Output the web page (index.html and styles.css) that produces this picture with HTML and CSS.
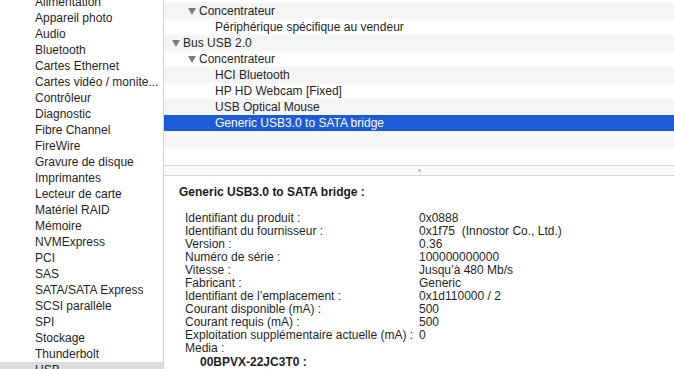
FILE: index.html
```html
<!DOCTYPE html>
<html lang="fr">
<head>
<meta charset="utf-8">
<link rel="stylesheet" href="styles.css">
</head>
<body>
<div class="app">
  <nav class="sidebar">
    <ul class="side-list">
      <li>Alimentation</li>
      <li>Appareil photo</li>
      <li>Audio</li>
      <li>Bluetooth</li>
      <li>Cartes Ethernet</li>
      <li>Cartes vidéo / monite...</li>
      <li>Contrôleur</li>
      <li>Diagnostic</li>
      <li>Fibre Channel</li>
      <li>FireWire</li>
      <li>Gravure de disque</li>
      <li>Imprimantes</li>
      <li>Lecteur de carte</li>
      <li>Matériel RAID</li>
      <li>Mémoire</li>
      <li>NVMExpress</li>
      <li>PCI</li>
      <li>SAS</li>
      <li>SATA/SATA Express</li>
      <li>SCSI parallèle</li>
      <li>SPI</li>
      <li>Stockage</li>
      <li>Thunderbolt</li>
      <li class="sel">USB</li>
    </ul>
  </nav>
  <main class="content">
    <div class="tree">
      <div class="row alt lvl2"><span class="tri"></span>Concentrateur</div>
      <div class="row lvl3">Périphérique spécifique au vendeur</div>
      <div class="row alt lvl1"><span class="tri"></span>Bus USB 2.0</div>
      <div class="row lvl2"><span class="tri"></span>Concentrateur</div>
      <div class="row alt lvl3">HCI Bluetooth</div>
      <div class="row lvl3">HP HD Webcam [Fixed]</div>
      <div class="row alt lvl3">USB Optical Mouse</div>
      <div class="row selected lvl3">Generic USB3.0 to SATA bridge</div>
      <div class="row alt"></div>
      <div class="row"></div>
    </div>
    <div class="splitter"><span class="grip"></span></div>
    <section class="detail">
      <h2 class="title">Generic USB3.0 to SATA bridge :</h2>
      <div class="props">
        <div class="prop"><span class="k">Identifiant du produit :</span><span class="v">0x0888</span></div>
        <div class="prop"><span class="k">Identifiant du fournisseur :</span><span class="v">0x1f75&nbsp; (Innostor Co., Ltd.)</span></div>
        <div class="prop"><span class="k">Version :</span><span class="v">0.36</span></div>
        <div class="prop"><span class="k">Numéro de série :</span><span class="v">100000000000</span></div>
        <div class="prop"><span class="k">Vitesse :</span><span class="v">Jusqu’à 480 Mb/s</span></div>
        <div class="prop"><span class="k">Fabricant :</span><span class="v">Generic</span></div>
        <div class="prop"><span class="k">Identifiant de l’emplacement :</span><span class="v">0x1d110000 / 2</span></div>
        <div class="prop"><span class="k">Courant disponible (mA) :</span><span class="v">500</span></div>
        <div class="prop"><span class="k">Courant requis (mA) :</span><span class="v">500</span></div>
        <div class="prop"><span class="k">Exploitation supplémentaire actuelle (mA) :</span><span class="v">0</span></div>
        <div class="prop"><span class="k">Media :</span></div>
        <div class="sub">00BPVX-22JC3T0 :</div>
      </div>
    </section>
  </main>
</div>
</body>
</html>
```

FILE: styles.css
```css
* { box-sizing: border-box; margin: 0; padding: 0; }
html, body { width: 674px; height: 369px; overflow: hidden; background: #fff; }
body {
  font-family: "Liberation Sans", Arial, sans-serif;
  font-size: 12px;
  color: #1f1f1f;
}
.app { display: flex; height: 369px; }
.sidebar {
  width: 164px;
  flex: none;
  border-right: 1px solid #d3d3d3;
  overflow: hidden;
  background: #fff;
}
.side-list { list-style: none; margin-top: -6px; }
.side-list li {
  height: 16px;
  line-height: 16px;
  padding-left: 35px;
  white-space: nowrap;
  overflow: hidden;
}
.side-list li.sel { background: #dcdcdc; }
.content { flex: 1; display: flex; flex-direction: column; min-width: 0; }
.tree { padding-top: 3px; }
.row {
  height: 16px;
  line-height: 16px;
  display: flex;
  align-items: center;
  white-space: nowrap;
}
.row.alt { background: #f4f5f5; }
.row.selected { background: #1d5bd8; color: #fff; }
.lvl1 { padding-left: 8px; }
.lvl2 { padding-left: 24px; }
.lvl3 { padding-left: 51px; }
.tri {
  width: 0; height: 0;
  border-left: 4px solid transparent;
  border-right: 4px solid transparent;
  border-top: 7px solid #7b7b7b;
  margin-right: 3px;
}
.splitter {
  margin-top: 2px;
  height: 11px;
  border-top: 1px solid #d6d6d6;
  border-bottom: 1px solid #d6d6d6;
  background: #fafafa;
  display: flex;
  align-items: center;
  justify-content: center;
}
.grip { width: 3px; height: 3px; border-radius: 50%; background: #b8b8b8; }
.detail { padding: 9px 0 0 15px; }
.title { font-size: 12px; font-weight: bold; line-height: 15px; color: #1a1a1a; }
.props { margin-top: 12px; padding-left: 6px; }
.prop { display: flex; height: 13px; line-height: 13px; white-space: nowrap; }
.k { width: 234px; flex: none; }
.sub { padding-left: 15px; font-weight: bold; height: 14px; line-height: 14px; }
```
